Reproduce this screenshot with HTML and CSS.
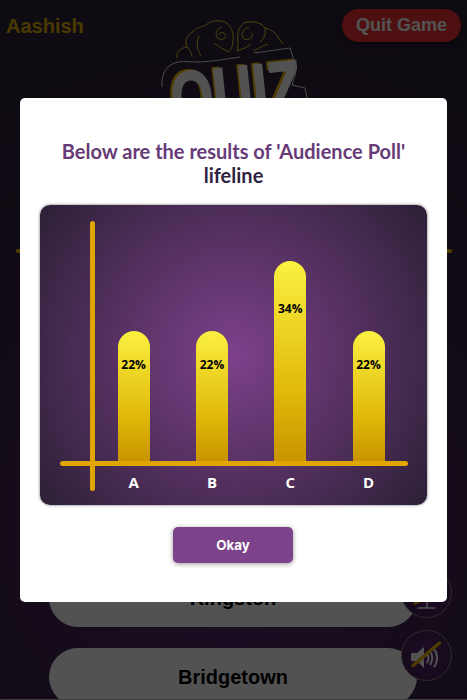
FILE: index.html
```html
<!DOCTYPE html>
<html lang="en">
<head>
  <meta charset="UTF-8">
  <title>Quiz Game</title>
  <link rel="stylesheet" href="styles.css">
</head>
<body>

  <div class="game">
    <div class="top-bar">
      <span class="player">Aashish</span>
      <button class="quit-btn">Quit Game</button>
    </div>

    <div class="logo">
      <span class="quiz-word">QUIZ</span>
      <svg class="logo-lines" width="170" height="95" viewBox="150 10 170 95" fill="none">
        <g stroke="#f0cf2a" stroke-width="1">
          <path d="M177 58 C176 52 180 48 187 47 C184 40 188 34 193 32 C196 27 203 27 206 25 C211 20 220 20 225 22 C231 25 234 33 233 41 C233 46 231 49 229 52"/>
          <path d="M229 52 C224 50 219 46 214 43 M187 47 C190 50 192 53 192 57 M199 36 C196 42 197 50 201 56"/>
          <path d="M222 27 C216 28 214 36 219 39 C224 41 228 36 224 33 C222 32 219 33 219 35"/>
          <path d="M237 51 C239 46 237 40 238 33 C239 26 244 21 251 22 C256 21 262 24 265 28 C271 29 277 34 278 38 C281 40 282 42 282 44"/>
          <path d="M249 27 C243 28 240 35 244 39 C249 41 254 37 252 33"/>
          <path d="M237 51 C243 49 247 47 251 44 M265 28 C266 34 264 39 260 42 M268 44 C262 46 256 50 253 51"/>
        </g>
        <g stroke="#e4e8ec" stroke-width="1">
          <path d="M162 87 C161 72 168 64 178 62 C186 61 192 62 200 62 C215 61 228 59 240 57"/>
          <path d="M254 53 L290 48 L295 63"/>
          <path d="M295 66 L296 72 L292 85 L305 88 L307 98"/>
        </g>
      </svg>
    </div>

    <div class="gold-line"></div>

    <div class="options">
      <button class="option">Kingston</button>
      <button class="option">Bridgetown</button>
    </div>

    <div class="side-icons">
      <button class="round-btn">
        <svg width="32" height="32" viewBox="0 0 32 32" fill="none">
          <path d="M16 20 V31 M6.5 31 H24.5" stroke="#fff" stroke-width="1.5"/>
          <path d="M3 27 L8 24.5" stroke="#f2bb00" stroke-width="2.5"/>
        </svg>
      </button>
      <button class="round-btn">
        <svg width="32" height="30" viewBox="0 0 32 30">
          <path d="M0 12 H6 L13 6 V27 L6 20 H0 Z" fill="#fff"/>
          <path d="M16 13 C18 15 18 19 16 22 M19 10 C22 14 22 20 19 24 M23 8 C27 13 27 21 23 26" fill="none" stroke="#fff" stroke-width="2"/>
          <path d="M2 24.5 L28.5 2" stroke="#f2bb00" stroke-width="3.5" stroke-linecap="round"/>
        </svg>
      </button>
    </div>
  </div>

  <div class="overlay"></div>

  <div class="modal">
    <h2 class="modal-title">Below are the results of 'Audience Poll' <span>lifeline</span></h2>

    <div class="chart">
      <div class="y-axis"></div>
      <div class="bars">
        <div class="bar-col"><div class="bar h22">22%</div></div>
        <div class="bar-col"><div class="bar h22">22%</div></div>
        <div class="bar-col"><div class="bar h34">34%</div></div>
        <div class="bar-col"><div class="bar h22">22%</div></div>
      </div>
      <div class="x-axis"></div>
      <div class="labels">
        <span>A</span>
        <span>B</span>
        <span>C</span>
        <span>D</span>
      </div>
    </div>

    <button class="okay-btn">Okay</button>
  </div>

</body>
</html>
```

FILE: styles.css
```css
* {
  box-sizing: border-box;
}

html, body {
  margin: 0;
  height: 100%;
  overflow: hidden;
}

body {
  position: relative;
  background-color: #2c2236;
  font-family: 'Liberation Sans', Arial, sans-serif;
}

button {
  font-family: inherit;
  border: none;
}

.game {
  height: 700px;
  overflow: hidden;
  background: radial-gradient(circle at 50% 75%, #5f2a78 0%, #3a2346 50%, #2c2236 100%);
}

.top-bar {
  display: flex;
  justify-content: space-between;
  align-items: flex-start;
  height: 42px;
  padding: 9px 6px 0;
}

.player {
  margin-top: 6px;
  font-size: 20px;
  font-weight: bold;
  color: #e6b000;
}

.quit-btn {
  width: 119px;
  height: 33px;
  padding: 0;
  border-radius: 17px;
  background-color: #f03030;
  color: #fff;
  font-size: 18px;
  font-weight: bold;
  box-shadow: 0 2px 6px rgba(0, 0, 0, 0.5);
}

.logo {
  position: absolute;
  top: 10px;
  left: 150px;
  width: 170px;
  height: 120px;
}

.logo-lines {
  position: absolute;
  top: 0;
  left: 0;
}

.quiz-word {
  position: absolute;
  top: 52px;
  left: 17px;
  font-size: 66px;
  font-weight: bold;
  line-height: 66px;
  color: #fff;
  -webkit-text-stroke: 1.5px #fff;
  text-shadow: -3px -2px 0 #f2bb00;
  transform-origin: left top;
  transform: rotate(-6deg) scale(0.83, 1.15);
}

.gold-line {
  position: absolute;
  top: 249px;
  left: 16px;
  width: 436px;
  height: 4px;
  border-radius: 2px;
  background-color: #f2bb00;
}

.options {
  display: flex;
  flex-direction: column;
  gap: 21px;
  margin-top: 527px;
  padding-left: 49px;
}

.option {
  flex: none;
  width: 368px;
  height: 58px;
  padding: 0;
  border-radius: 29px;
  background-color: #fff;
  color: #000;
  font-size: 20px;
  font-weight: bold;
}

.side-icons {
  position: absolute;
  top: 567px;
  left: 401px;
  display: flex;
  flex-direction: column;
  gap: 12px;
}

.round-btn {
  width: 51px;
  height: 51px;
  padding: 0;
  border-radius: 50%;
  border: 1px solid #8a8a8a;
  background: radial-gradient(circle, #5f2a78 0%, #3a1c4c 100%);
  display: flex;
  align-items: center;
  justify-content: center;
}

.round-btn svg {
  overflow: visible;
}

.overlay {
  position: absolute;
  inset: 0;
  border-bottom: 1px solid #3c3c3c;
  background-color: rgba(0, 0, 0, 0.68);
}

.modal {
  position: absolute;
  top: 98px;
  left: 20px;
  width: 427px;
  height: 504px;
  padding: 41px 20px 0;
  background-color: #fff;
  border-radius: 5px;
  display: flex;
  flex-direction: column;
  align-items: center;
}

.modal-title {
  margin: 0;
  font-family: Lato, sans-serif;
  font-size: 20px;
  font-weight: bold;
  line-height: 24px;
  text-align: center;
  color: #673a78;
}

.modal-title span {
  color: #2f1f40;
}

.chart {
  position: relative;
  align-self: stretch;
  height: 300px;
  margin-top: 18px;
  flex: none;
  border-radius: 10px;
  background: radial-gradient(circle at 50% 50%, #7d418b 0%, #2c2036 100%);
  box-shadow: 0 0 3px rgba(0, 0, 0, 0.6);
}

.y-axis {
  position: absolute;
  top: 16px;
  left: 50px;
  width: 5px;
  height: 270px;
  border-radius: 3px;
  background-color: #e0a500;
}

.x-axis {
  position: absolute;
  top: 256px;
  left: 20px;
  width: 348px;
  height: 5px;
  border-radius: 3px;
  background-color: #e0a500;
}

.bars {
  position: absolute;
  top: 0;
  left: 54.5px;
  height: 256px;
  display: grid;
  grid-template-columns: repeat(4, 78.3px);
}

.bar-col {
  display: flex;
  align-items: flex-end;
  justify-content: center;
}

.bar {
  width: 32px;
  border-radius: 16px 16px 0 0;
  background: linear-gradient(to bottom, #fbf041 0%, #e0ba0a 65%, #c99400 100%);
  font-family: 'Open Sans', sans-serif;
  font-size: 12px;
  font-weight: bold;
  line-height: 16px;
  text-align: center;
  color: #000;
}

.h22 {
  height: 130px;
  padding-top: 26px;
}

.h34 {
  height: 200px;
  padding-top: 40px;
}

.labels {
  position: absolute;
  top: 267px;
  left: 54.5px;
  display: grid;
  grid-template-columns: repeat(4, 78.3px);
  font-family: 'Open Sans', sans-serif;
  font-size: 15px;
  font-weight: bold;
  line-height: 20px;
  text-align: center;
  color: #fff;
}

.okay-btn {
  width: 120px;
  height: 36px;
  margin: 22px 1px 0 0;
  flex: none;
  border-radius: 5px;
  background-color: #7d438a;
  color: #fff;
  font-family: Inter, sans-serif;
  font-size: 13.33px;
  font-weight: bold;
  box-shadow: 0 1px 5px rgba(0, 0, 0, 0.4);
}
```
